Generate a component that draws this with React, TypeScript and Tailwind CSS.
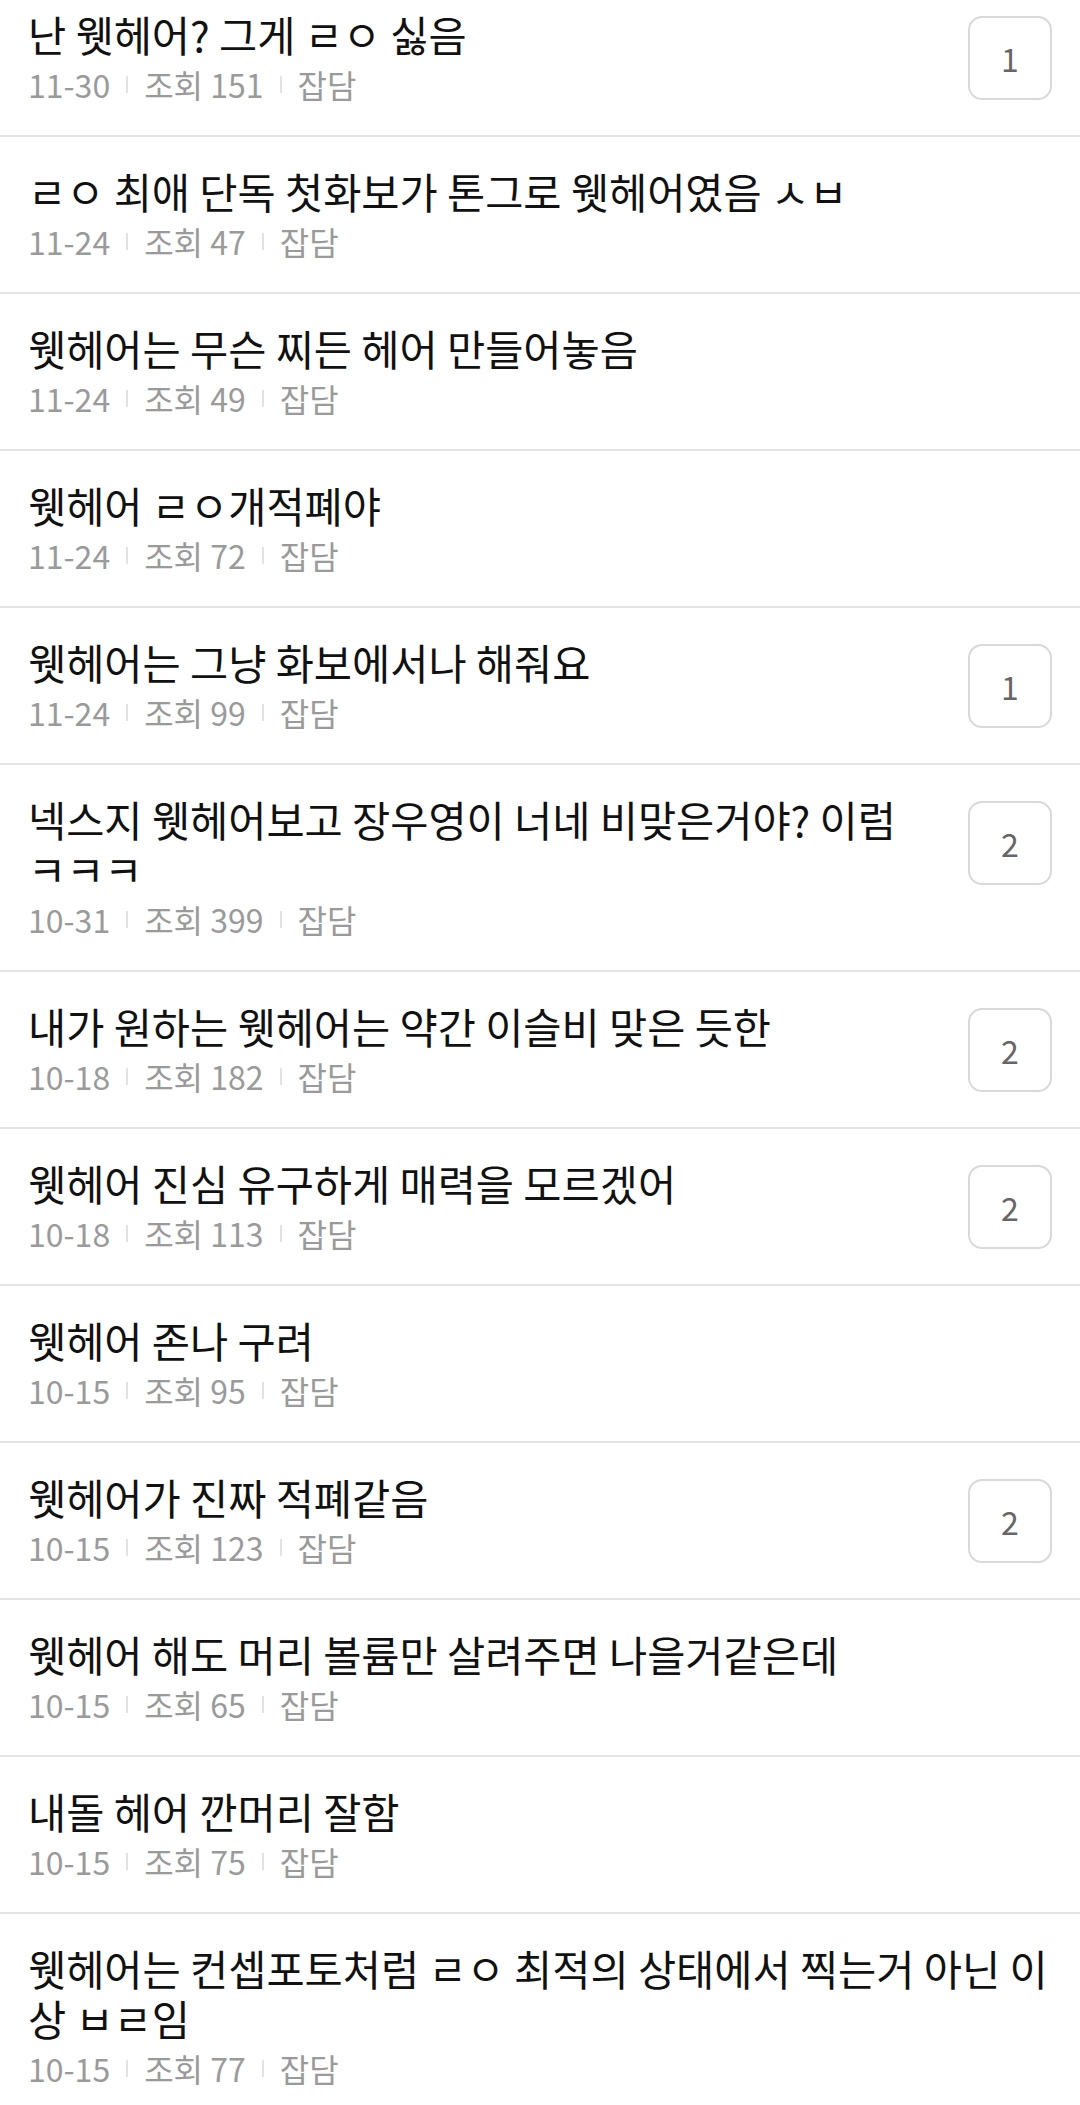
import React from "react";

type Row = { title: string; date: string; views: number; count?: number };

const rows: Row[] = [
  { title: "난 웻헤어? 그게 ㄹㅇ 싫음", date: "11-30", views: 151, count: 1 },
  { title: "ㄹㅇ 최애 단독 첫화보가 톤그로 웻헤어였음 ㅅㅂ", date: "11-24", views: 47 },
  { title: "웻헤어는 무슨 찌든 헤어 만들어놓음", date: "11-24", views: 49 },
  { title: "웻헤어 ㄹㅇ개적폐야", date: "11-24", views: 72 },
  { title: "웻헤어는 그냥 화보에서나 해줘요", date: "11-24", views: 99, count: 1 },
  { title: "넥스지 웻헤어보고 장우영이 너네 비맞은거야? 이럼 ㅋㅋㅋ", date: "10-31", views: 399, count: 2 },
  { title: "내가 원하는 웻헤어는 약간 이슬비 맞은 듯한", date: "10-18", views: 182, count: 2 },
  { title: "웻헤어 진심 유구하게 매력을 모르겠어", date: "10-18", views: 113, count: 2 },
  { title: "웻헤어 존나 구려", date: "10-15", views: 95 },
  { title: "웻헤어가 진짜 적폐같음", date: "10-15", views: 123, count: 2 },
  { title: "웻헤어 해도 머리 볼륨만 살려주면 나을거같은데", date: "10-15", views: 65 },
  { title: "내돌 헤어 깐머리 잘함", date: "10-15", views: 75 },
  { title: "웻헤어는 컨셉포토처럼 ㄹㅇ 최적의 상태에서 찍는거 아닌 이상 ㅂㄹ임", date: "10-15", views: 77 },
];

function Sep() {
  return <span className="mx-[16px] inline-block h-[17px] w-[2px] bg-[#e2e2e2]" />;
}

export default function App() {
  return (
    <div
      className="w-[1080px] h-[2105px] overflow-hidden bg-white"
      style={{ fontFamily: '"Noto Sans CJK KR", "Noto Sans", sans-serif' }}
    >
      <div className="-mt-[20px]">
        {rows.map((r, i) => (
          <div key={i} className="flex items-start border-b-2 border-[#e4e4e4] pl-[28px] pr-[28px] pt-[29px] pb-[29px]">
            <div className="flex-1 min-w-0">
              <div className="text-[41.5px] leading-[50px] text-[#111111]">{r.title}</div>
              <div className="mt-[3px] flex items-center text-[32px] leading-[44px] text-[#9a9a9a]">
                <span>{r.date}</span>
                <Sep />
                <span>조회 {r.views}</span>
                <Sep />
                <span>잡담</span>
              </div>
            </div>
            {r.count !== undefined && (
              <div className="ml-[40px] mt-[7px] flex h-[84px] w-[84px] shrink-0 items-center justify-center rounded-[14px] border-2 border-[#d9d9d9] text-[32px] text-[#666666]">
                {r.count}
              </div>
            )}
          </div>
        ))}
      </div>
    </div>
  );
}
